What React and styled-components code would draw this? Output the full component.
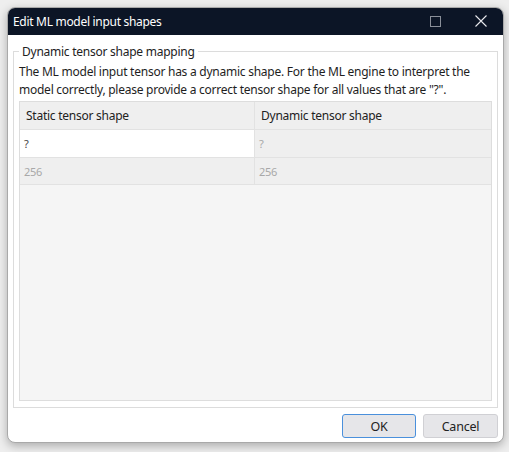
import React from "react";
import styled, { createGlobalStyle } from "styled-components";

const Global = createGlobalStyle`
  html, body { margin: 0; padding: 0; }
  body {
    background: #eeeeee;
    font-family: "Noto Sans", "Open Sans", sans-serif;
    width: 509px;
    height: 452px;
    overflow: hidden;
  }
`;

const Stage = styled.div`
  padding: 7px 5px 0 7px;
`;

const Window = styled.div`
  width: 497px;
  height: 436px;
  box-sizing: border-box;
  background: #ffffff;
  border-radius: 8px;
  border: 1px solid #a9a9a9;
  box-shadow: 0 3px 10px rgba(0, 0, 0, 0.28);
  display: flex;
  flex-direction: column;
  overflow: hidden;
`;

const TitleBar = styled.div`
  height: 28px;
  margin: -1px -1px 0 -1px;
  background: #0c1526;
  border-radius: 8px 8px 0 0;
  display: flex;
  align-items: center;
  padding-left: 6px;
  color: #ffffff;
  font-size: 12px;
  flex-shrink: 0;
`;

const Title = styled.span`
  flex: 1;
  letter-spacing: -0.3px;
`;

const Caption = styled.button`
  width: 46px;
  height: 28px;
  border: 0;
  background: transparent;
  padding: 0;
  display: flex;
  align-items: center;
  justify-content: center;
`;

const Body = styled.div`
  flex: 1;
  display: flex;
  flex-direction: column;
  padding: 8px 5px 4px 5px;
  min-width: 0;
`;

const Group = styled.fieldset`
  margin: 0;
  padding: 0 5px 6px 5px;
  border: 1px solid #dcdcdc;
  flex: 1;
  display: flex;
  flex-direction: column;
  min-height: 0;
  min-width: 0;
`;

const Legend = styled.legend`
  font-size: 12px;
  color: #222;
  padding: 0 3px;
  margin-left: 0;
  line-height: 17px;
  letter-spacing: -0.25px;
`;

const Description = styled.p`
  margin: 3px 0 2px 0;
  font-size: 12px;
  line-height: 18px;
  color: #1e1e1e;
  letter-spacing: -0.25px;
  white-space: nowrap;
`;

const Table = styled.div`
  flex: 1;
  border: 1px solid #dddddd;
  background: #f5f5f5;
  display: flex;
  flex-direction: column;
`;

const Row = styled.div`
  display: grid;
  grid-template-columns: 234px 1fr;
  height: ${(p) => p.$h}px;
  border-bottom: 1px solid #e2e2e2;
  box-sizing: border-box;
`;

const Cell = styled.div`
  display: flex;
  align-items: center;
  padding-left: ${(p) => (p.$header ? 6 : 4)}px;
  font-size: ${(p) => (p.$header ? 12 : 11)}px;
  letter-spacing: -0.25px;
  color: ${(p) => (p.$header ? "#222" : p.$dim ? "#a8a8a8" : "#444")};
  background: ${(p) => (p.$white ? "#ffffff" : "#efefef")};
  border-left: ${(p) => (p.$divider ? "1px solid #e2e2e2" : "0")};
`;

const Footer = styled.div`
  display: flex;
  justify-content: flex-end;
  gap: 7px;
  padding-top: 6px;
`;

const Button = styled.button`
  width: ${(p) => p.$w}px;
  height: 24px;
  border-radius: 3px;
  background: #e6e6e9;
  border: 1px solid ${(p) => (p.$primary ? "#4a90dc" : "#d0d0d4")};
  font-family: "Noto Sans", "Open Sans", sans-serif;
  font-size: 12.5px;
  letter-spacing: -0.2px;
  color: #222;
  padding: 0;
`;

export default function App() {
  return (
    <>
      <Global />
      <Stage>
        <Window>
          <TitleBar>
            <Title>Edit ML model input shapes</Title>
            <Caption aria-label="Maximize">
              <svg width="11" height="11" viewBox="0 0 11 11">
                <rect x="0.5" y="0.5" width="10" height="10" fill="none" stroke="#8a8f99" strokeWidth="1" />
              </svg>
            </Caption>
            <Caption aria-label="Close">
              <svg width="12" height="12" viewBox="0 0 12 12">
                <path d="M0.5 0.5 L11.5 11.5 M11.5 0.5 L0.5 11.5" stroke="#e8e8ec" strokeWidth="1.1" />
              </svg>
            </Caption>
          </TitleBar>
          <Body>
            <Group>
              <Legend>Dynamic tensor shape mapping</Legend>
              <Description>
                The ML model input tensor has a dynamic shape. For the ML engine to interpret the
                <br />
                model correctly, please provide a correct tensor shape for all values that are "?".
              </Description>
              <Table>
                <Row $h={28}>
                  <Cell $header>Static tensor shape</Cell>
                  <Cell $header $divider>Dynamic tensor shape</Cell>
                </Row>
                <Row $h={28}>
                  <Cell $white>?</Cell>
                  <Cell $dim $divider>?</Cell>
                </Row>
                <Row $h={27}>
                  <Cell $dim>256</Cell>
                  <Cell $dim $divider>256</Cell>
                </Row>
              </Table>
            </Group>
            <Footer>
              <Button $primary $w={74}>OK</Button>
              <Button $w={75}>Cancel</Button>
            </Footer>
          </Body>
        </Window>
      </Stage>
    </>
  );
}
